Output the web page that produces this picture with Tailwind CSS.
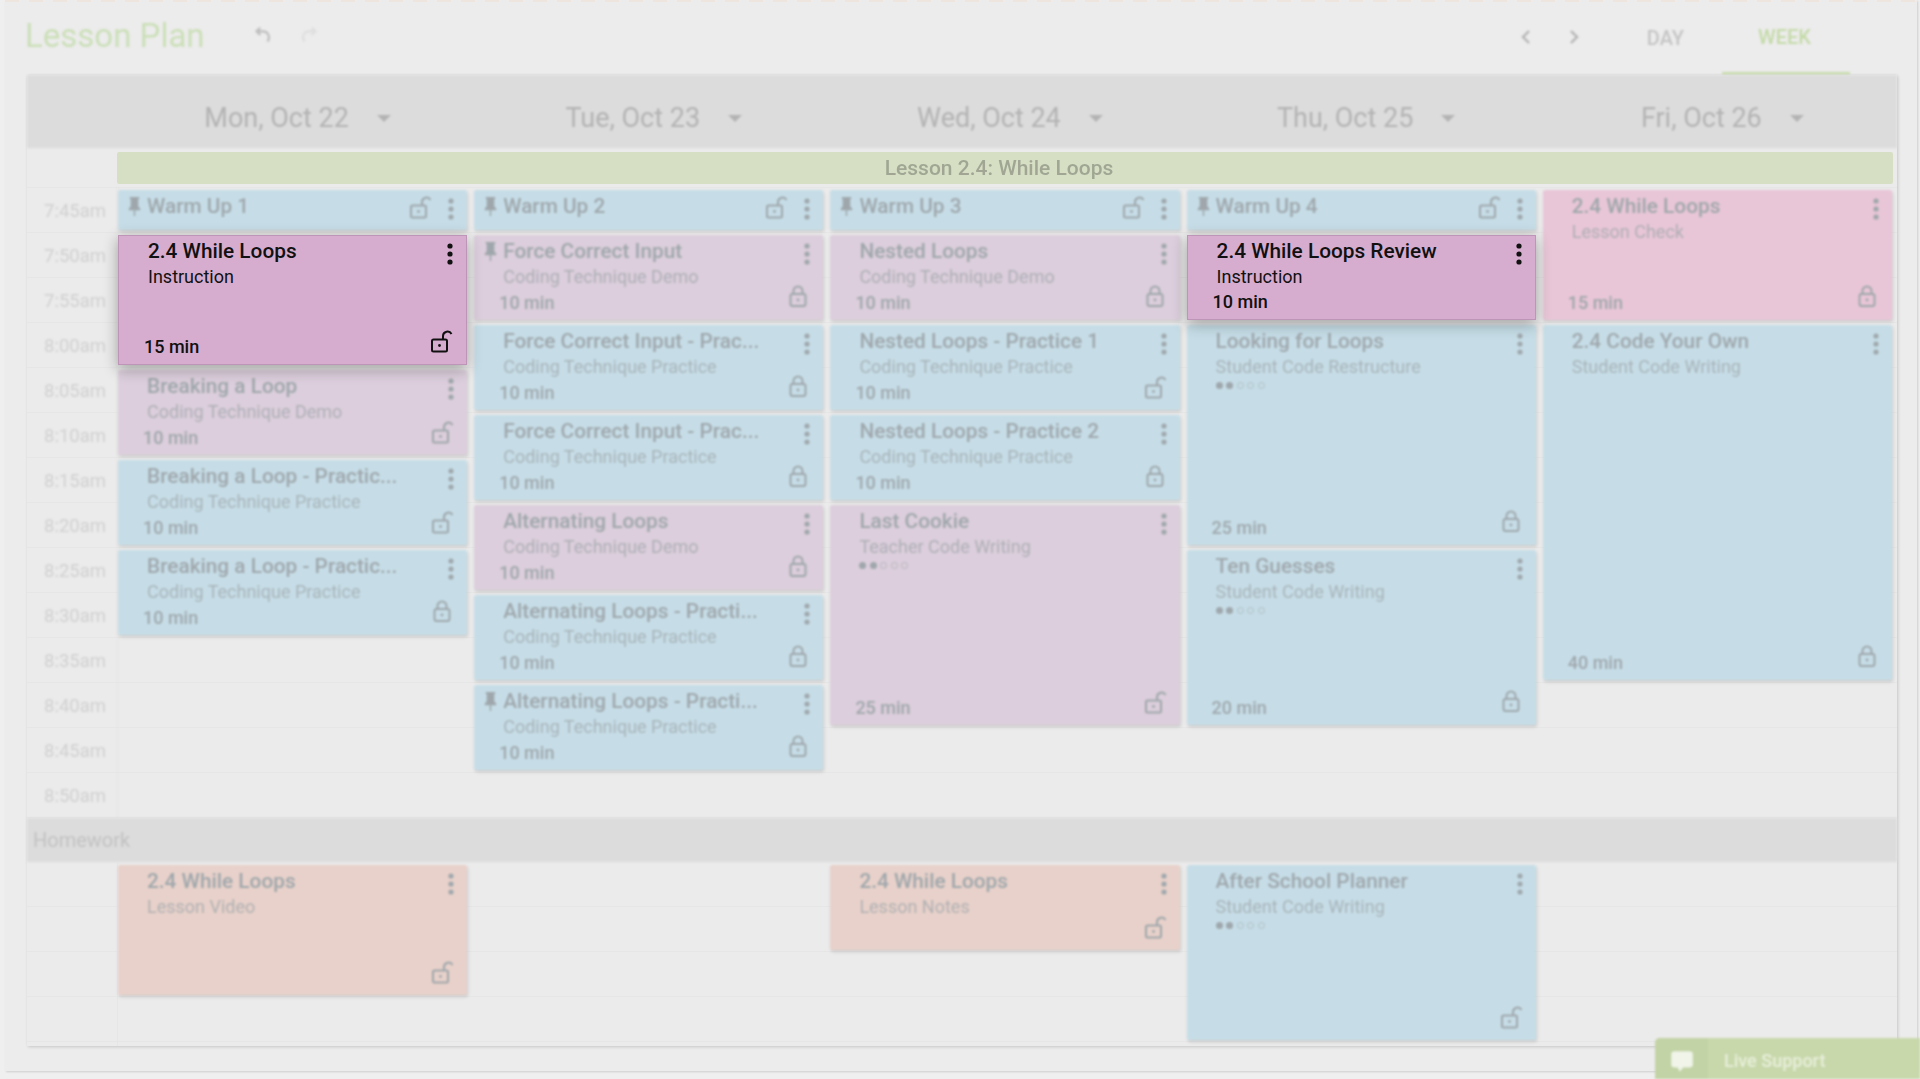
<!DOCTYPE html>
<html lang="en">
<head>
<meta charset="UTF-8" />
<title>Lesson Plan</title>
<script src="https://cdn.jsdelivr.net/npm/@tailwindcss/browser@4"></script>
</head>
<body class="h-screen overflow-hidden bg-[#efefef] font-['Roboto',sans-serif]">
  <div class="relative ml-[5px] mr-[3px] h-[1071px] bg-[#ececec] shadow-[1px_1px_2px_rgba(0,0,0,0.14)]">
    <div class="h-[2px] bg-[repeating-linear-gradient(90deg,#eee6de_0,#eee6de_14px,transparent_14px,transparent_24px)]"></div>

    <!-- top bar -->
    <div class="flex h-[73px] items-center pl-[20px] blur-[0.9px]">
      <h1 class="-mt-[6px] text-[33px] leading-none text-[#cbdfb8]">Lesson Plan</h1>
      <svg class="-mt-[7px] ml-[47px] size-[22px] text-[#bdbdbd]" viewBox="0 0 24 24" fill="none" stroke="currentColor" stroke-width="2.4"><path d="M9 4 5 8l4 4M5 8h7a6.5 6.5 0 0 1 6 9l-1 2"/></svg>
      <svg class="-mt-[7px] ml-[24px] size-[22px] text-[#dedede]" viewBox="0 0 24 24" fill="none" stroke="currentColor" stroke-width="2.4"><path d="m15 4 4 4-4 4M19 8h-7a6.5 6.5 0 0 0-6 9l1 2"/></svg>
      <div class="ml-auto flex h-full items-center">
        <svg class="-mt-[3px] size-[24px] text-[#b5b5b5]" viewBox="0 0 24 24" fill="none" stroke="currentColor" stroke-width="2.4"><path d="m15 6-6 6 6 6"/></svg>
        <svg class="-mt-[3px] ml-[24px] size-[24px] text-[#b5b5b5]" viewBox="0 0 24 24" fill="none" stroke="currentColor" stroke-width="2.4"><path d="m9 6 6 6-6 6"/></svg>
        <span class="-mt-[2px] ml-[61px] text-[20px] font-medium text-[#c4c4c4]">DAY</span>
        <div class="ml-[38px] mr-[67px] flex h-full w-[128px] items-center justify-center border-b-[3px] border-[#c8dcae] pr-[3px] text-[20px] font-medium text-[#c4daa8]">WEEK</div>
      </div>
    </div>

    <!-- calendar -->
    <div class="ml-[22px] w-[1870px] bg-[#ebebeb] shadow-[1px_1px_3px_rgba(0,0,0,0.16)]">
      <div class="grid h-[73px] grid-cols-[91px_repeat(5,356.2px)] bg-[#dcdcdc] pt-[14px] blur-[0.9px]" id="days"><div></div></div>
      <div class="flex h-[39px] items-center pl-[90px] pr-[4px] blur-[0.7px]">
        <div class="flex h-[32px] flex-1 items-center justify-center rounded-[2px] bg-[#d6dfc4] pr-[12px] pt-[2px] text-[21px] font-medium text-[#a0a693]">Lesson 2.4: While Loops</div>
      </div>
      <div class="grid h-[631px] grid-cols-[91px_repeat(5,356.2px)] bg-[repeating-linear-gradient(180deg,#e6e6e6_0,#e6e6e6_1px,transparent_1px,transparent_45px)]" id="main">
        <div class="border-r border-[#e6e6e6] blur-[0.9px]" id="times"></div>
      </div>
      <div class="flex h-[44px] items-center bg-[#dcdcdc] pl-[6px] text-[20px] text-[#c2c2c2] blur-[0.9px]">Homework</div>
      <div class="grid h-[184px] grid-cols-[91px_repeat(5,356.2px)] bg-[repeating-linear-gradient(180deg,transparent_0,transparent_44px,#e6e6e6_44px,#e6e6e6_45px)]" id="homework">
        <div class="border-r border-[#e6e6e6]"></div>
      </div>
    </div>
  </div>

  <!-- live support -->
  <div class="fixed bottom-0 right-0 flex h-[41px] w-[265px] items-center overflow-hidden rounded-tl-[5px] bg-[#c8d8ab] blur-[0.8px]">
    <div class="flex h-full w-[53px] items-center justify-center bg-[#c2d3a5] pt-[4px]">
      <svg class="size-[26px] text-[#f0f4e9]" viewBox="0 0 24 24" fill="currentColor"><path d="M5 3h14a3 3 0 0 1 3 3v9a3 3 0 0 1-3 3h-6l-3 4-2-4H5a3 3 0 0 1-3-3V6a3 3 0 0 1 3-3z"/></svg>
    </div>
    <span class="ml-[16px] pt-[4px] text-[18px] font-medium text-[#e8efdb]">Live Support</span>
  </div>

<script>
  const blue = "bg-[#c6dde7]", mauve = "bg-[#dccedc]", pink = "bg-[#e8c6d7]", salmon = "bg-[#e8d1ca]";
  const PIN = `<svg class="absolute left-[5px] top-[5px] size-[23px]" viewBox="0 0 24 24" fill="currentColor"><path d="M16 12V4h1V2H7v2h1v8l-2 2v2h5.2v6h1.6v-6H18v-2l-2-2z"/></svg>`;
  const MENU = `<svg class="mr-[10px] mt-[5px] h-[22px] w-[12px] shrink-0" viewBox="0 0 12 22" fill="currentColor"><circle cx="6" cy="3" r="2.6"/><circle cx="6" cy="11" r="2.6"/><circle cx="6" cy="19" r="2.6"/></svg>`;
  const LOCK = `<svg class="mb-[12px] mr-[13px] size-[24px] shrink-0" viewBox="0 0 24 24" fill="none" stroke="currentColor" stroke-width="2"><rect x="4.5" y="10" width="15" height="12" rx="2"/><path d="M7.5 10V7a4.5 4.5 0 0 1 9 0v3"/><circle cx="12" cy="16" r="1.4" fill="currentColor" stroke="none"/></svg>`;
  const OPEN_SHAPE = `viewBox="0 0 24 24" fill="none" stroke="currentColor" stroke-width="2"><rect x="2" y="9.5" width="15" height="12" rx="1.5"/><path d="M13 9.5V6a4.5 4.5 0 0 1 8.5-2"/><circle cx="9.5" cy="15.5" r="1.4" fill="currentColor" stroke="none"/></svg>`;
  const OPEN = `<svg class="mb-[10px] mr-[12px] size-[24px] shrink-0" ${OPEN_SHAPE}`;

  function heightOf(rows) { return (rows * 45 - 5) + "px"; }

  function warmUp(title) {
    return `<div class="relative flex h-[40px] shrink-0 items-start rounded-[2px] ${blue} pl-[29px] text-[#9fa7ac] shadow-[1px_2px_3px_rgba(0,0,0,0.14)] blur-[0.8px]">
      ${PIN}<span class="flex-1 pt-[3px] text-[20.8px] font-medium leading-[26px]">${title}</span>
      <svg class="mr-[12px] mt-[6px] size-[24px] shrink-0" ${OPEN_SHAPE}
      <svg class="mr-[10px] mt-[8px] h-[22px] w-[12px] shrink-0" viewBox="0 0 12 22" fill="currentColor"><circle cx="6" cy="3" r="2.6"/><circle cx="6" cy="11" r="2.6"/><circle cx="6" cy="19" r="2.6"/></svg>
    </div>`;
  }

  function card(c) {
    const selected = c.selected;
    const look = selected
      ? "relative z-10 border border-[#bd95b6] bg-[#d7adcf] text-[#111111] shadow-[0_4px_14px_rgba(0,0,0,0.32)]"
      : `relative rounded-[2px] ${c.color} text-[#9fa7ac] shadow-[1px_2px_3px_rgba(0,0,0,0.14)] blur-[0.8px]`;
    const stars = c.dots
      ? `<div class="mt-[2px] flex gap-[3.5px]">
           <i class="size-[7px] rounded-full bg-current"></i><i class="size-[7px] rounded-full bg-current"></i>
           <i class="size-[7px] rounded-full border border-current opacity-60"></i><i class="size-[7px] rounded-full border border-current opacity-60"></i><i class="size-[7px] rounded-full border border-current opacity-60"></i>
         </div>`
      : "";
    const icon = c.noIcon ? "" : c.lock ? LOCK : OPEN;
    return `<div class="flex shrink-0 flex-col ${look}" style="height:${heightOf(c.rows)}">
      ${c.pin ? PIN : ""}
      <div class="flex min-h-0 flex-1 items-start justify-between pl-[29px] ${selected ? "pt-[2px]" : "pt-[3px]"}">
        <div class="min-w-0">
          <div class="whitespace-nowrap text-[20.8px] font-medium leading-[26px]">${c.title}</div>
          <div class="whitespace-nowrap text-[18px] leading-[26px] ${selected ? "" : "opacity-75"}">${c.sub}</div>
          ${stars}
        </div>
        ${MENU}
      </div>
      <div class="flex h-[28px] shrink-0 items-end justify-between pl-[25px]">
        <span class="pb-[6px] text-[18px] font-medium leading-[22px]">${c.time}</span>${icon}
      </div>
    </div>`;
  }

  const DEMO = "Coding Technique Demo", PRAC = "Coding Technique Practice";
  const week = [
    { warm: "Warm Up 1", cards: [
      { title: "2.4 While Loops", sub: "Instruction", time: "15 min", rows: 3, selected: true },
      { title: "Breaking a Loop", sub: DEMO, time: "10 min", rows: 2, color: mauve },
      { title: "Breaking a Loop - Practic...", sub: PRAC, time: "10 min", rows: 2, color: blue },
      { title: "Breaking a Loop - Practic...", sub: PRAC, time: "10 min", rows: 2, color: blue, lock: true },
    ]},
    { warm: "Warm Up 2", cards: [
      { title: "Force Correct Input", sub: DEMO, time: "10 min", rows: 2, color: mauve, lock: true, pin: true },
      { title: "Force Correct Input - Prac...", sub: PRAC, time: "10 min", rows: 2, color: blue, lock: true },
      { title: "Force Correct Input - Prac...", sub: PRAC, time: "10 min", rows: 2, color: blue, lock: true },
      { title: "Alternating Loops", sub: DEMO, time: "10 min", rows: 2, color: mauve, lock: true },
      { title: "Alternating Loops - Practi...", sub: PRAC, time: "10 min", rows: 2, color: blue, lock: true },
      { title: "Alternating Loops - Practi...", sub: PRAC, time: "10 min", rows: 2, color: blue, lock: true, pin: true },
    ]},
    { warm: "Warm Up 3", cards: [
      { title: "Nested Loops", sub: DEMO, time: "10 min", rows: 2, color: mauve, lock: true },
      { title: "Nested Loops - Practice 1", sub: PRAC, time: "10 min", rows: 2, color: blue },
      { title: "Nested Loops - Practice 2", sub: PRAC, time: "10 min", rows: 2, color: blue, lock: true },
      { title: "Last Cookie", sub: "Teacher Code Writing", time: "25 min", rows: 5, color: mauve, dots: true },
    ]},
    { warm: "Warm Up 4", cards: [
      { title: "2.4 While Loops Review", sub: "Instruction", time: "10 min", rows: 2, selected: true, noIcon: true },
      { title: "Looking for Loops", sub: "Student Code Restructure", time: "25 min", rows: 5, color: blue, lock: true, dots: true },
      { title: "Ten Guesses", sub: "Student Code Writing", time: "20 min", rows: 4, color: blue, lock: true, dots: true },
    ]},
    { cards: [
      { title: "2.4 While Loops", sub: "Lesson Check", time: "15 min", rows: 3, color: pink, lock: true },
      { title: "2.4 Code Your Own", sub: "Student Code Writing", time: "40 min", rows: 8, color: blue, lock: true },
    ]},
  ];
  const homework = [
    [{ title: "2.4 While Loops", sub: "Lesson Video", time: "", rows: 3, color: salmon }],
    [],
    [{ title: "2.4 While Loops", sub: "Lesson Notes", time: "", rows: 2, color: salmon }],
    [{ title: "After School Planner", sub: "Student Code Writing", time: "", rows: 4, color: blue, dots: true }],
    [],
  ];

  document.getElementById("days").insertAdjacentHTML("beforeend", ["Mon, Oct 22", "Tue, Oct 23", "Wed, Oct 24", "Thu, Oct 25", "Fri, Oct 26"].map((d) =>
    `<div class="flex items-center justify-center gap-[28px] pl-[3px] text-[27px] text-[#b3b3b3]">${d}<span class="h-0 w-0 border-x-[7px] border-t-[7px] border-x-transparent border-t-[#b3b3b3]"></span></div>`).join(""));

  const labels = ["7:45am","7:50am","7:55am","8:00am","8:05am","8:10am","8:15am","8:20am","8:25am","8:30am","8:35am","8:40am","8:45am","8:50am"];
  document.getElementById("times").innerHTML = labels.map((t) =>
    `<div class="flex h-[45px] items-center justify-end pr-[11px] pt-[4px] text-[18.5px] text-[#d0d0d0]">${t}</div>`).join("");

  document.getElementById("main").insertAdjacentHTML("beforeend", week.map((col) =>
    `<div class="flex flex-col gap-[5px] pr-[7px] pt-[3px]">${col.warm ? warmUp(col.warm) : ""}${col.cards.map(card).join("")}</div>`).join(""));

  document.getElementById("homework").insertAdjacentHTML("beforeend", homework.map((col) =>
    `<div class="flex flex-col gap-[5px] pr-[7px] pt-[3px]">${col.map(card).join("")}</div>`).join(""));
</script>
</body>
</html>
